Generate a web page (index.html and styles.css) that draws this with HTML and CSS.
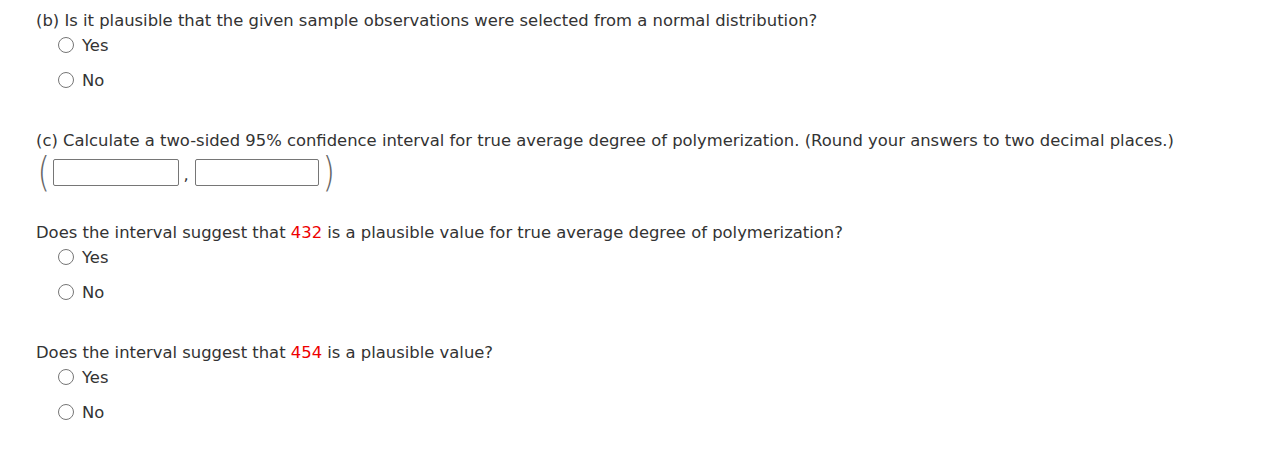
FILE: index.html
```html
<!DOCTYPE html>
<html>
<head>
<meta charset="utf-8">
<link rel="stylesheet" href="styles.css">
</head>
<body>
<div class="page">
  <section class="part">
    <p class="q">(b) Is it plausible that the given sample observations were selected from a normal distribution?</p>
    <ul class="opts">
      <li><span class="radio"></span>Yes</li>
      <li><span class="radio"></span>No</li>
    </ul>
  </section>
  <section class="part">
    <p class="q">(c) Calculate a two-sided 95% confidence interval for true average degree of polymerization. (Round your answers to two decimal places.)</p>
    <div class="interval">
      <span class="paren left">(</span>
      <span class="box"></span>
      <span class="comma">,</span>
      <span class="box"></span>
      <span class="paren right">)</span>
    </div>
  </section>
  <section class="part after-interval">
    <p class="q">Does the interval suggest that <span class="red">432</span> is a plausible value for true average degree of polymerization?</p>
    <ul class="opts">
      <li><span class="radio"></span>Yes</li>
      <li><span class="radio"></span>No</li>
    </ul>
  </section>
  <section class="part">
    <p class="q">Does the interval suggest that <span class="red">454</span> is a plausible value?</p>
    <ul class="opts">
      <li><span class="radio"></span>Yes</li>
      <li><span class="radio"></span>No</li>
    </ul>
  </section>
</div>
</body>
</html>
```
FILE: styles.css
```css
html, body {
  margin: 0;
  padding: 0;
  background: #fff;
}
body {
  font-family: "DejaVu Sans", Verdana, sans-serif;
  font-size: 16.4px;
  color: #333;
}
.page {
  padding: 11px 0 0 36px;
}
.part + .part {
  margin-top: 39px;
}
.part.after-interval {
  margin-top: 36px;
}
.q {
  margin: 0;
  line-height: 20px;
  height: 20px;
  white-space: nowrap;
}
.opts {
  list-style: none;
  margin: 2px 0 0 0;
  padding: 0 0 0 22px;
}
.opts li {
  height: 24px;
  display: flex;
  align-items: center;
}
.opts li + li {
  margin-top: 11px;
}
.radio {
  width: 14px;
  height: 14px;
  border: 1px solid #767676;
  border-radius: 50%;
  margin-right: 8px;
  flex: none;
}
.interval {
  margin-top: 7px;
  height: 29px;
  display: flex;
  align-items: center;
}
.paren {
  font-size: 40px;
  line-height: 29px;
  color: #666;
  font-weight: 200;
  transform: scaleX(0.8);
}
.paren.left {
  margin-right: -2px;
}
.paren.right {
  margin-left: -1px;
}
.box {
  width: 124px;
  height: 25px;
  border: 1px solid #767676;
  border-radius: 2px;
  margin: 0 3px;
}
.box + .comma + .box {
  width: 122px;
}
.comma {
  margin: 4px 3px 0 2px;
}
.red {
  color: #e00;
}
```
